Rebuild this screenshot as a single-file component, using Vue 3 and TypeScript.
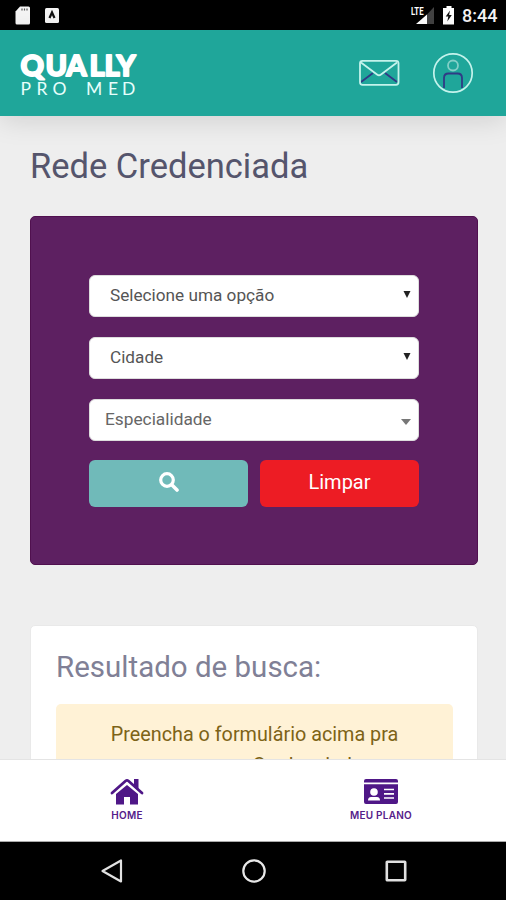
<script setup lang="ts">
import { ref } from 'vue'

interface Field {
  label: string
  kind: 'native' | 'search'
}

const fields = ref<Field[]>([
  { label: 'Selecione uma opção', kind: 'native' },
  { label: 'Cidade', kind: 'native' },
  { label: 'Especialidade', kind: 'search' },
])
</script>

<template>
  <div class="screen">
    <div class="status">
      <svg class="status-left" width="48" height="20" viewBox="0 0 48 20">
        <path d="M6 1.500h8.500q1.500 0 1.500 1.500v15q0 1.500-1.500 1.500H3Q1.500 19.500 1.500 18V6.500z" fill="#f5f5f5" />
        <path d="M8 3.500v2M10.500 3.500v2M13 3.500v2" stroke="#555" stroke-width="1.200" />
        <rect x="31" y="3" width="14" height="15" rx="1.500" fill="#f5f5f5" />
        <path d="M35.500 13L38 7.500l2.500 5.500" fill="none" stroke="#111" stroke-width="2.200" />
      </svg>
      <div class="status-right">
        <svg width="46" height="22" viewBox="0 0 46 22">
          <path d="M23 2v17H7z" fill="#424242" />
          <path d="M16 9.500V19H5z" fill="#fff" />
          <text x="0" y="9.500" class="lte" textLength="12.500" lengthAdjust="spacingAndGlyphs">LTE</text>
          <path d="M35.500 1h5v2h2.500v16.500H32V3h3.500z" fill="#fff" />
          <path d="M39 5.500l-4.300 6h2.600l-1 5 4.500-6.500h-2.700z" fill="#111" />
        </svg>
        <span class="clock">8:44</span>
      </div>
    </div>

    <header class="top">
      <svg class="logo" width="122" height="48" viewBox="0 0 122 48">
        <text x="1.500 26.500 47.300 70.500 85.500 97.500" y="24.500" class="brand">QUALLY</text>
        <text x="1.500 17.500 33.500 50 67 89 103" y="44" class="brand-sub">PRO MED</text>
      </svg>
      <div class="top-icons">
        <svg width="42" height="28" viewBox="0 0 42 28" fill="none">
          <path d="M3 23L15 14M39 23L27 14" stroke="#303a85" stroke-width="1.800" />
          <rect x="2" y="1.800" width="38.500" height="24" rx="2.500" stroke="#c4f3ec" stroke-width="1.800" />
          <path d="M3 3.500L19 15.500q2 1.500 4 0L39 3.500" stroke="#c4f3ec" stroke-width="1.800" />
        </svg>
        <svg width="42" height="42" viewBox="0 0 42 42" fill="none">
          <path d="M12 36V26q0-4.500 4.500-4.500h9q4.500 0 4.500 4.500V36" stroke="#303a85" stroke-width="1.800" />
          <circle cx="21" cy="13.500" r="5" stroke="#83cfc7" stroke-width="1.800" />
          <circle cx="21" cy="21" r="19.200" stroke="#c4f3ec" stroke-width="1.700" />
        </svg>
      </div>
    </header>

    <main class="content">
      <h1>Rede Credenciada</h1>
      <form class="panel" @submit.prevent>
        <div v-for="field in fields" :key="field.label" class="field" :class="field.kind">
          <span>{{ field.label }}</span>
          <svg v-if="field.kind === 'native'" width="8" height="7" viewBox="0 0 8 7"><path d="M.5 0h7L4 7z" fill="#222" /></svg>
          <svg v-else width="10" height="6" viewBox="0 0 10 6"><path d="M0 0h10L5 6z" fill="#777" /></svg>
        </div>
        <div class="buttons">
          <button class="find" type="submit" aria-label="Buscar">
            <svg width="20" height="20" viewBox="0 0 20 20" fill="none">
              <circle cx="8" cy="8" r="6.300" stroke="#fff" stroke-width="3.200" />
              <path d="M13 13l5 5" stroke="#fff" stroke-width="3.600" stroke-linecap="round" />
            </svg>
          </button>
          <button class="clear" type="button">Limpar</button>
        </div>
      </form>
      <section class="results">
        <h2>Resultado de busca:</h2>
        <p class="notice">Preencha o formulário acima pra<br />procurar um Credenciado.</p>
      </section>
    </main>

    <nav class="tabs">
      <a class="tab">
        <svg width="34" height="28" viewBox="0 0 34 28">
          <path d="M24 1h4.500v12L24 9z" fill="#4f1787" />
          <path d="M2 15L15.500 3q1.500-1.200 3 0L32 15" fill="none" stroke="#4f1787" stroke-width="2.800" stroke-linecap="round" />
          <path d="M6 16L17 7 28 16v10.500h-8V19h-6v7.500H6z" fill="#4f1787" />
        </svg>
        <span>HOME</span>
      </a>
      <a class="tab">
        <svg width="34" height="28" viewBox="0 0 34 28">
          <path d="M0 4.600V3q0-2 2-2h30q2 0 2 2v1.600zM0 6.300h34V24q0 2-2 2H2q-2 0-2-2z" fill="#4f1787" />
          <circle cx="10" cy="14" r="3.800" fill="#fff" />
          <path d="M4 22.500q0-3.500 3-3.500h6q3 0 3 3.500z" fill="#fff" />
          <path d="M20 11.500h10M20 15.800h10M20 20h10" stroke="#fff" stroke-width="1.700" />
        </svg>
        <span>MEU PLANO</span>
      </a>
    </nav>

    <div class="system">
      <svg width="24" height="26" viewBox="0 0 24 26"><path d="M21 2.500v21L2.500 13z" fill="none" stroke="#e2e2e2" stroke-width="2.200" stroke-linejoin="round" /></svg>
      <svg width="26" height="26" viewBox="0 0 26 26"><circle cx="13" cy="13" r="10.700" fill="none" stroke="#e8e8e8" stroke-width="2.200" /></svg>
      <svg width="24" height="24" viewBox="0 0 24 24"><rect x="2.800" y="2.800" width="18.400" height="18.400" rx=".5" fill="none" stroke="#e0e0e0" stroke-width="2.600" /></svg>
    </div>
  </div>
</template>

<style>
body { margin: 0; }
</style>

<style scoped>
* { box-sizing: border-box; }
.screen { width: 506px; height: 900px; display: flex; flex-direction: column; overflow: hidden; background: #eee; font-family: Roboto, sans-serif; }
.status { height: 30px; flex: none; background: #000; display: flex; justify-content: space-between; align-items: flex-start; padding: 5px 9px 0 14px; }
.status-right { display: flex; align-items: flex-start; }
.lte { font: 700 10px Roboto, sans-serif; fill: #fff; }
.clock { color: #f4f4f4; font-size: 18px; line-height: 22px; font-weight: 500; width: 35px; margin-left: 5px; white-space: nowrap; }
.top { height: 86px; flex: none; background: #1fa69a; display: flex; justify-content: space-between; align-items: center; padding: 0 32px 0 19px; box-shadow: 0 4px 28px rgba(0, 0, 0, .13); z-index: 1; }
.logo { display: block; margin-top: 3px; overflow: visible; }
.brand { font: 900 29px Lato, sans-serif; fill: #fff; stroke: #fff; stroke-width: 1.8; stroke-linejoin: round; }
.brand-sub { font: 400 17.500px Lato, sans-serif; fill: #e7fffc; }
.top-icons { display: flex; align-items: center; gap: 32px; }
.content { flex: 1; min-height: 0; overflow: hidden; padding: 30px 28px 0 30px; }
h1 { margin: 0; height: 70px; line-height: 41px; font-size: 34.5px; font-weight: 400; color: #55556c; white-space: nowrap; }
.panel { height: 349px; margin: 0; padding: 58px 58px 0; background: #5d2061; border: 1px solid #50104f; border-radius: 5px; display: flex; flex-direction: column; gap: 20px; }
.field { height: 42px; flex: none; border: 1px solid #ddd; background: #fff; border-radius: 6px; display: flex; justify-content: space-between; align-items: center; padding: 0 7px 3px 20px; font-size: 17.2px; color: #555; }
.field.search { padding: 1px 7px 3px 15px; color: #666; font-size: 17.3px; }
.field.search svg { margin-top: 5px; }
.buttons { display: grid; grid-template-columns: 159px 159px; justify-content: space-between; margin-top: -1px; }
button { height: 47px; border: 0; border-radius: 6px; display: flex; align-items: center; justify-content: center; font: 400 20px Roboto, sans-serif; color: #fff; padding: 0 0 3px; }
.find { background: #70bab9; }
.clear { background: #ed1c24; }
.results { margin-top: 60px; height: 250px; background: #fff; border: 1px solid #e9e9e9; border-radius: 5px; padding: 25px 24px 0 25px; }
h2 { margin: 0; height: 53px; line-height: 33px; font-size: 29.5px; font-weight: 400; color: #808096; white-space: nowrap; }
.notice { margin: 0; height: 150px; padding-top: 15px; background: #fff2d6; border-radius: 5px; text-align: center; font-size: 19.8px; line-height: 31px; color: #7d6316; }
.tabs { height: 83px; flex: none; background: #fff; border-top: 1px solid #e4e4e4; display: grid; grid-template-columns: 254px 254px; border-bottom: 1px solid #aaa; }
.tab { display: flex; flex-direction: column; align-items: center; padding-top: 18px; }
.tab svg { display: block; }
.tab span { font: 600 10px/14px Inter, sans-serif; letter-spacing: .25px; color: #55208a; margin-top: 2px; white-space: nowrap; }
.system { height: 58px; flex: none; background: #000; display: grid; grid-template-columns: 142px 142px 142px; justify-content: center; align-items: center; justify-items: center; padding-left: 2px; }
</style>
